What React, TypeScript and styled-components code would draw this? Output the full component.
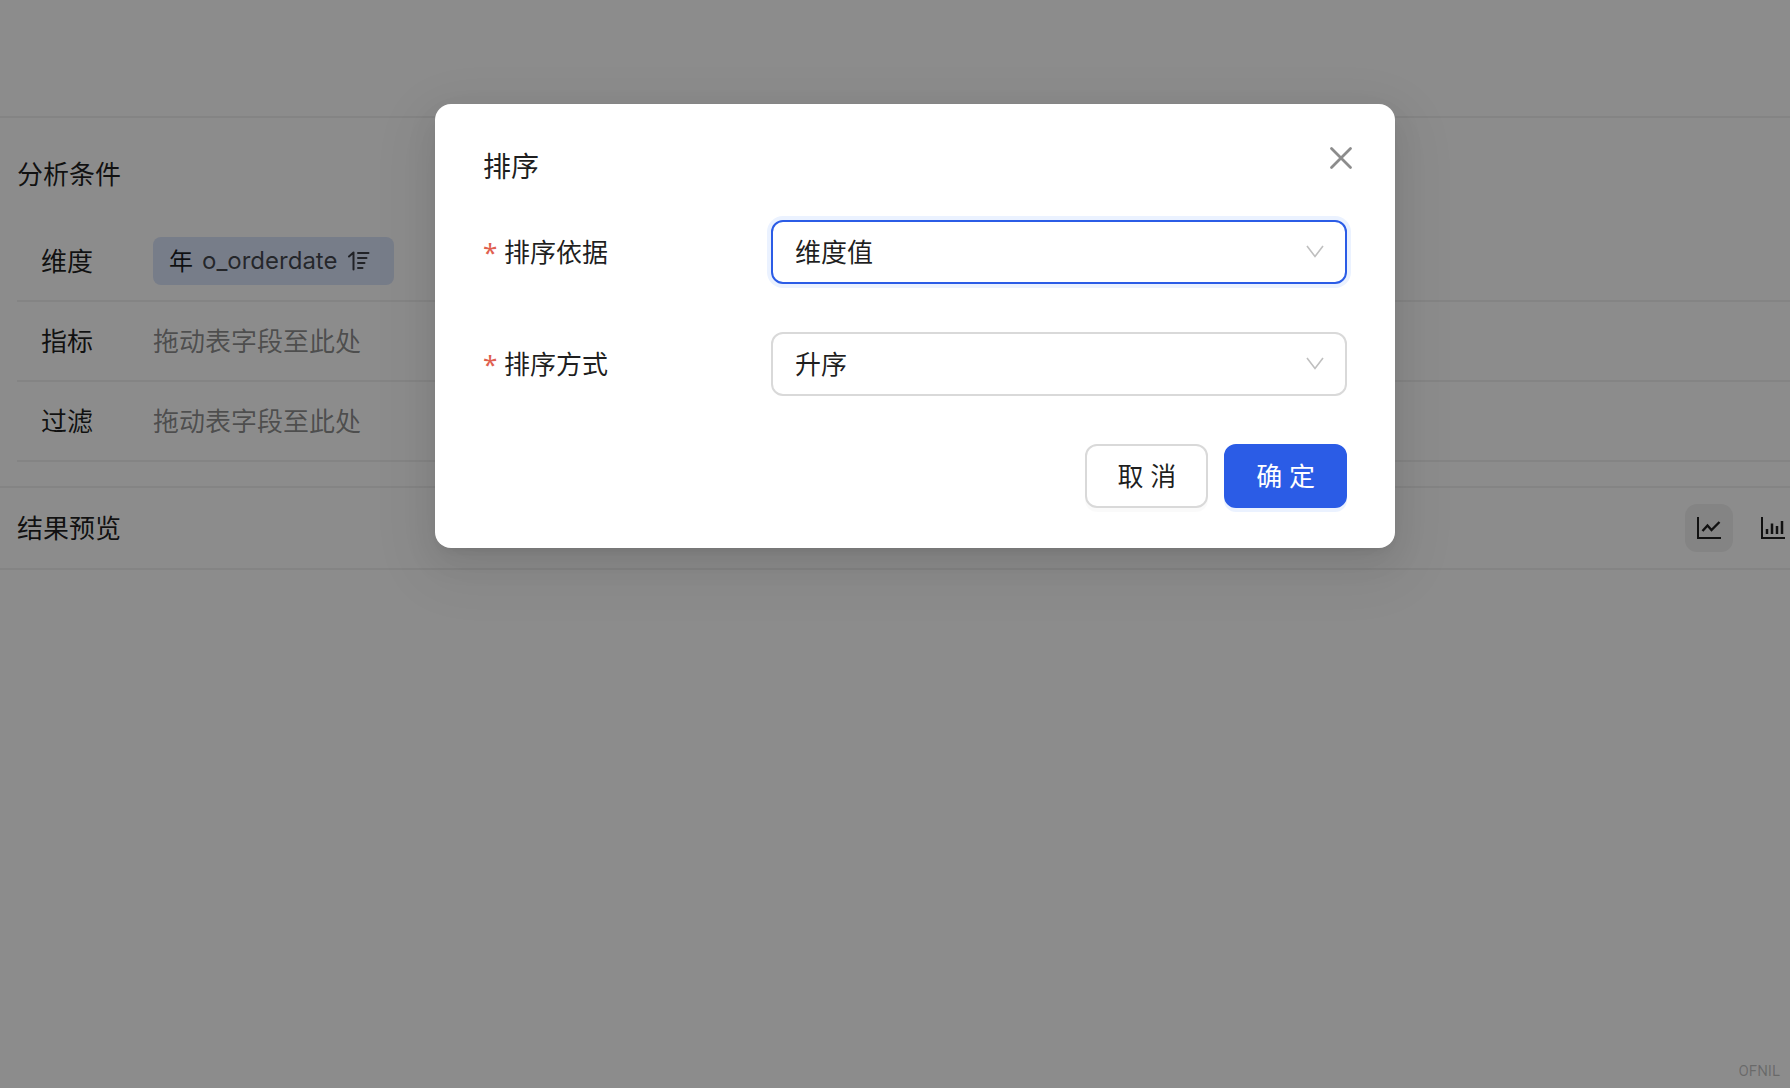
import React, { useState } from "react";
import styled, { createGlobalStyle, css } from "styled-components";

const GlobalStyle = createGlobalStyle`
  * { box-sizing: border-box; }
  html, body { margin: 0; padding: 0; }
  body, button, select {
    font-family: "Noto Sans", "Noto Sans CJK SC", sans-serif;
    font-size: 26px;
    line-height: 40px;
    color: rgba(0, 0, 0, 0.88);
  }
`;

const Viewport = styled.div`
  min-height: 100vh;
  overflow: hidden;
  background: #fff;
  display: flex;
`;

const Page = styled.div`
  position: relative;
  flex: 0 0 calc(100% + 40px);
  display: flex;
  flex-direction: column;
`;

const line = css`
  border-bottom: 2px solid #f0f0f0;
`;

const TopBar = styled.header`
  height: 118px;
  ${line}
`;

const Conditions = styled.section`
  padding: 36px 0 24px 17px;
  ${line}
`;

const Heading = styled.h2`
  margin: 0;
  font-size: 26px;
  line-height: 40px;
  font-weight: 400;
`;

const Rows = styled.div`
  padding-top: 28px;
`;

const Row = styled.div`
  display: flex;
  align-items: center;
  height: 80px;
  padding-left: 24px;
  ${line}
`;

const RowLabel = styled.span`
  width: 112px;
`;

const Placeholder = styled.span`
  color: rgba(0, 0, 0, 0.45);
`;

const Tag = styled.span`
  display: flex;
  align-items: center;
  gap: 9px;
  height: 48px;
  padding: 0 24px 0 16px;
  border-radius: 8px;
  background: #d9e3fa;
  font-size: 24px;
  line-height: 48px;
`;

const TagField = styled.span`
  font-family: Inter, "Noto Sans CJK SC", sans-serif;
  color: rgba(0, 0, 0, 0.7);
`;

const ResultBar = styled.section`
  display: flex;
  align-items: center;
  justify-content: space-between;
  height: 82px;
  padding: 0 33px 0 17px;
  ${line}
`;

const Tools = styled.div`
  display: flex;
  gap: 16px;
`;

const ToolButton = styled.button<{ $active?: boolean }>`
  display: flex;
  align-items: center;
  justify-content: center;
  width: 48px;
  height: 48px;
  padding: 0;
  border: 0;
  border-radius: 12px;
  background: ${(p) => (p.$active ? "#f0f0f0" : "transparent")};
`;

const Canvas = styled.main`
  flex: 1;
  display: flex;
  align-items: flex-end;
  justify-content: flex-end;
  padding: 0 50px 7px;
`;

const Credit = styled.span`
  font-family: Roboto, sans-serif;
  font-size: 15px;
  line-height: 20px;
  color: rgba(0, 0, 0, 0.25);
`;

const Mask = styled.div`
  position: absolute;
  inset: 0;
  display: flex;
  align-items: flex-start;
  justify-content: center;
  padding-top: 104px;
  background: rgba(0, 0, 0, 0.45);
`;

const Dialog = styled.form`
  width: 960px;
  padding: 40px 48px;
  border-radius: 16px;
  background: #fff;
  box-shadow: 0 12px 32px rgba(0, 0, 0, 0.08), 0 6px 12px -8px rgba(0, 0, 0, 0.12),
    0 18px 56px 16px rgba(0, 0, 0, 0.05);
`;

const DialogHeader = styled.div`
  display: flex;
  justify-content: space-between;
  align-items: flex-start;
  height: 76px;
`;

const DialogTitle = styled.h1`
  margin: 0;
  font-size: 28px;
  line-height: 44px;
  font-weight: 400;
`;

const CloseButton = styled.button`
  display: flex;
  align-items: center;
  justify-content: center;
  width: 44px;
  height: 44px;
  margin: -8px -16px 0 0;
  padding: 0;
  border: 0;
  background: transparent;
`;

const Field = styled.div`
  display: grid;
  grid-template-columns: 1fr 2fr;
  align-items: center;
  margin-bottom: 48px;
`;

const FieldLabel = styled.label`
  display: flex;
  align-items: center;
  gap: 8px;
`;

const Required = styled.span`
  width: 13px;
  color: #e0604f;
`;

const SelectBox = styled.div`
  display: grid;
  align-items: center;
  > * { grid-area: 1 / 1; }
  > svg {
    justify-self: end;
    margin-right: 20px;
    pointer-events: none;
  }
`;

const Select = styled.select<{ $active?: boolean }>`
  appearance: none;
  width: 100%;
  height: 64px;
  padding: 0 48px 0 22px;
  border: 2px solid ${(p) => (p.$active ? "#2b5ce6" : "#d9d9d9")};
  border-radius: 12px;
  background: #fff;
  outline: 0;
  box-shadow: ${(p) => (p.$active ? "0 0 0 4px #ebf2ff" : "none")};
`;

const Footer = styled.div`
  display: flex;
  justify-content: flex-end;
  gap: 16px;
`;

const Button = styled.button<{ $primary?: boolean }>`
  height: 64px;
  padding: 0 30px;
  border: 2px solid ${(p) => (p.$primary ? "#2b5ce6" : "#d9d9d9")};
  border-radius: 12px;
  background: ${(p) => (p.$primary ? "#2b5ce6" : "#fff")};
  color: ${(p) => (p.$primary ? "#fff" : "rgba(0, 0, 0, 0.88)")};
  box-shadow: 0 4px 0 ${(p) => (p.$primary ? "#ebf2ff" : "rgba(0, 0, 0, 0.02)")};
`;

const SortIcon = () => (
  <svg width="24" height="24" viewBox="0 0 24 24" fill="none" stroke="#3c3f46" strokeWidth="2" strokeLinecap="round" strokeLinejoin="round">
    <path d="M3 7.5 7.500 3.5V20.500M12 4H22.500M12 9H20.500M12 14H18.500M12 19H16.500" />
  </svg>
);

const Arrow = () => (
  <svg width="24" height="24" viewBox="0 0 24 24" fill="none" stroke="#bfbfbf" strokeWidth="1.6">
    <path d="M4 6 12 16.500 20 6" />
  </svg>
);

const CloseIcon = () => (
  <svg width="32" height="32" viewBox="0 0 32 32" fill="none" stroke="#8c8c8c" strokeWidth="2.8" strokeLinecap="round">
    <path d="M6.500 6.500 25.500 25.500M25.500 6.500 6.500 25.500" />
  </svg>
);

const LineChartIcon = () => (
  <svg width="28" height="28" viewBox="0 0 28 28" fill="none" stroke="#1f1f1f" strokeWidth="2">
    <path d="M3 3V24H26" />
    <path d="M7.500 17 12.500 11.500 16.500 16 24.500 8" strokeWidth="2.400" />
  </svg>
);

const BarChartIcon = () => (
  <svg width="28" height="28" viewBox="0 0 28 28" fill="none" stroke="#1f1f1f" strokeWidth="2">
    <path d="M3 3V24H26" />
    <path d="M8 20V15M13 20V9.500M18 20V12M23 20V7" strokeWidth="2.500" />
  </svg>
);

const fields = [
  { id: "sort-by", label: "排序依据", options: ["维度值", "指标值"] },
  { id: "sort-order", label: "排序方式", options: ["升序", "降序"] },
];

export default function App() {
  const [active, setActive] = useState("sort-by");
  return (
    <>
      <GlobalStyle />
      <Viewport>
        <Page>
          <TopBar />
          <Conditions>
            <Heading>分析条件</Heading>
            <Rows>
              <Row>
                <RowLabel>维度</RowLabel>
                <Tag>
                  <span>年</span>
                  <TagField>o_orderdate</TagField>
                  <SortIcon />
                </Tag>
              </Row>
              {["指标", "过滤"].map((name) => (
                <Row key={name}>
                  <RowLabel>{name}</RowLabel>
                  <Placeholder>拖动表字段至此处</Placeholder>
                </Row>
              ))}
            </Rows>
          </Conditions>
          <ResultBar>
            <Heading>结果预览</Heading>
            <Tools>
              <ToolButton type="button" aria-label="折线图" $active>
                <LineChartIcon />
              </ToolButton>
              <ToolButton type="button" aria-label="柱状图">
                <BarChartIcon />
              </ToolButton>
            </Tools>
          </ResultBar>
          <Canvas>
            <Credit>OFNIL</Credit>
          </Canvas>
          <Mask>
            <Dialog role="dialog" aria-labelledby="dialog-title" onSubmit={(e) => e.preventDefault()}>
              <DialogHeader>
                <DialogTitle id="dialog-title">排序</DialogTitle>
                <CloseButton type="button" aria-label="关闭">
                  <CloseIcon />
                </CloseButton>
              </DialogHeader>
              {fields.map((f) => (
                <Field key={f.id}>
                  <FieldLabel htmlFor={f.id}>
                    <Required>*</Required>
                    {f.label}
                  </FieldLabel>
                  <SelectBox>
                    <Select id={f.id} $active={active === f.id} onFocus={() => setActive(f.id)}>
                      {f.options.map((o) => (
                        <option key={o}>{o}</option>
                      ))}
                    </Select>
                    <Arrow />
                  </SelectBox>
                </Field>
              ))}
              <Footer>
                <Button type="button">取 消</Button>
                <Button type="submit" $primary>
                  确 定
                </Button>
              </Footer>
            </Dialog>
          </Mask>
        </Page>
      </Viewport>
    </>
  );
}
